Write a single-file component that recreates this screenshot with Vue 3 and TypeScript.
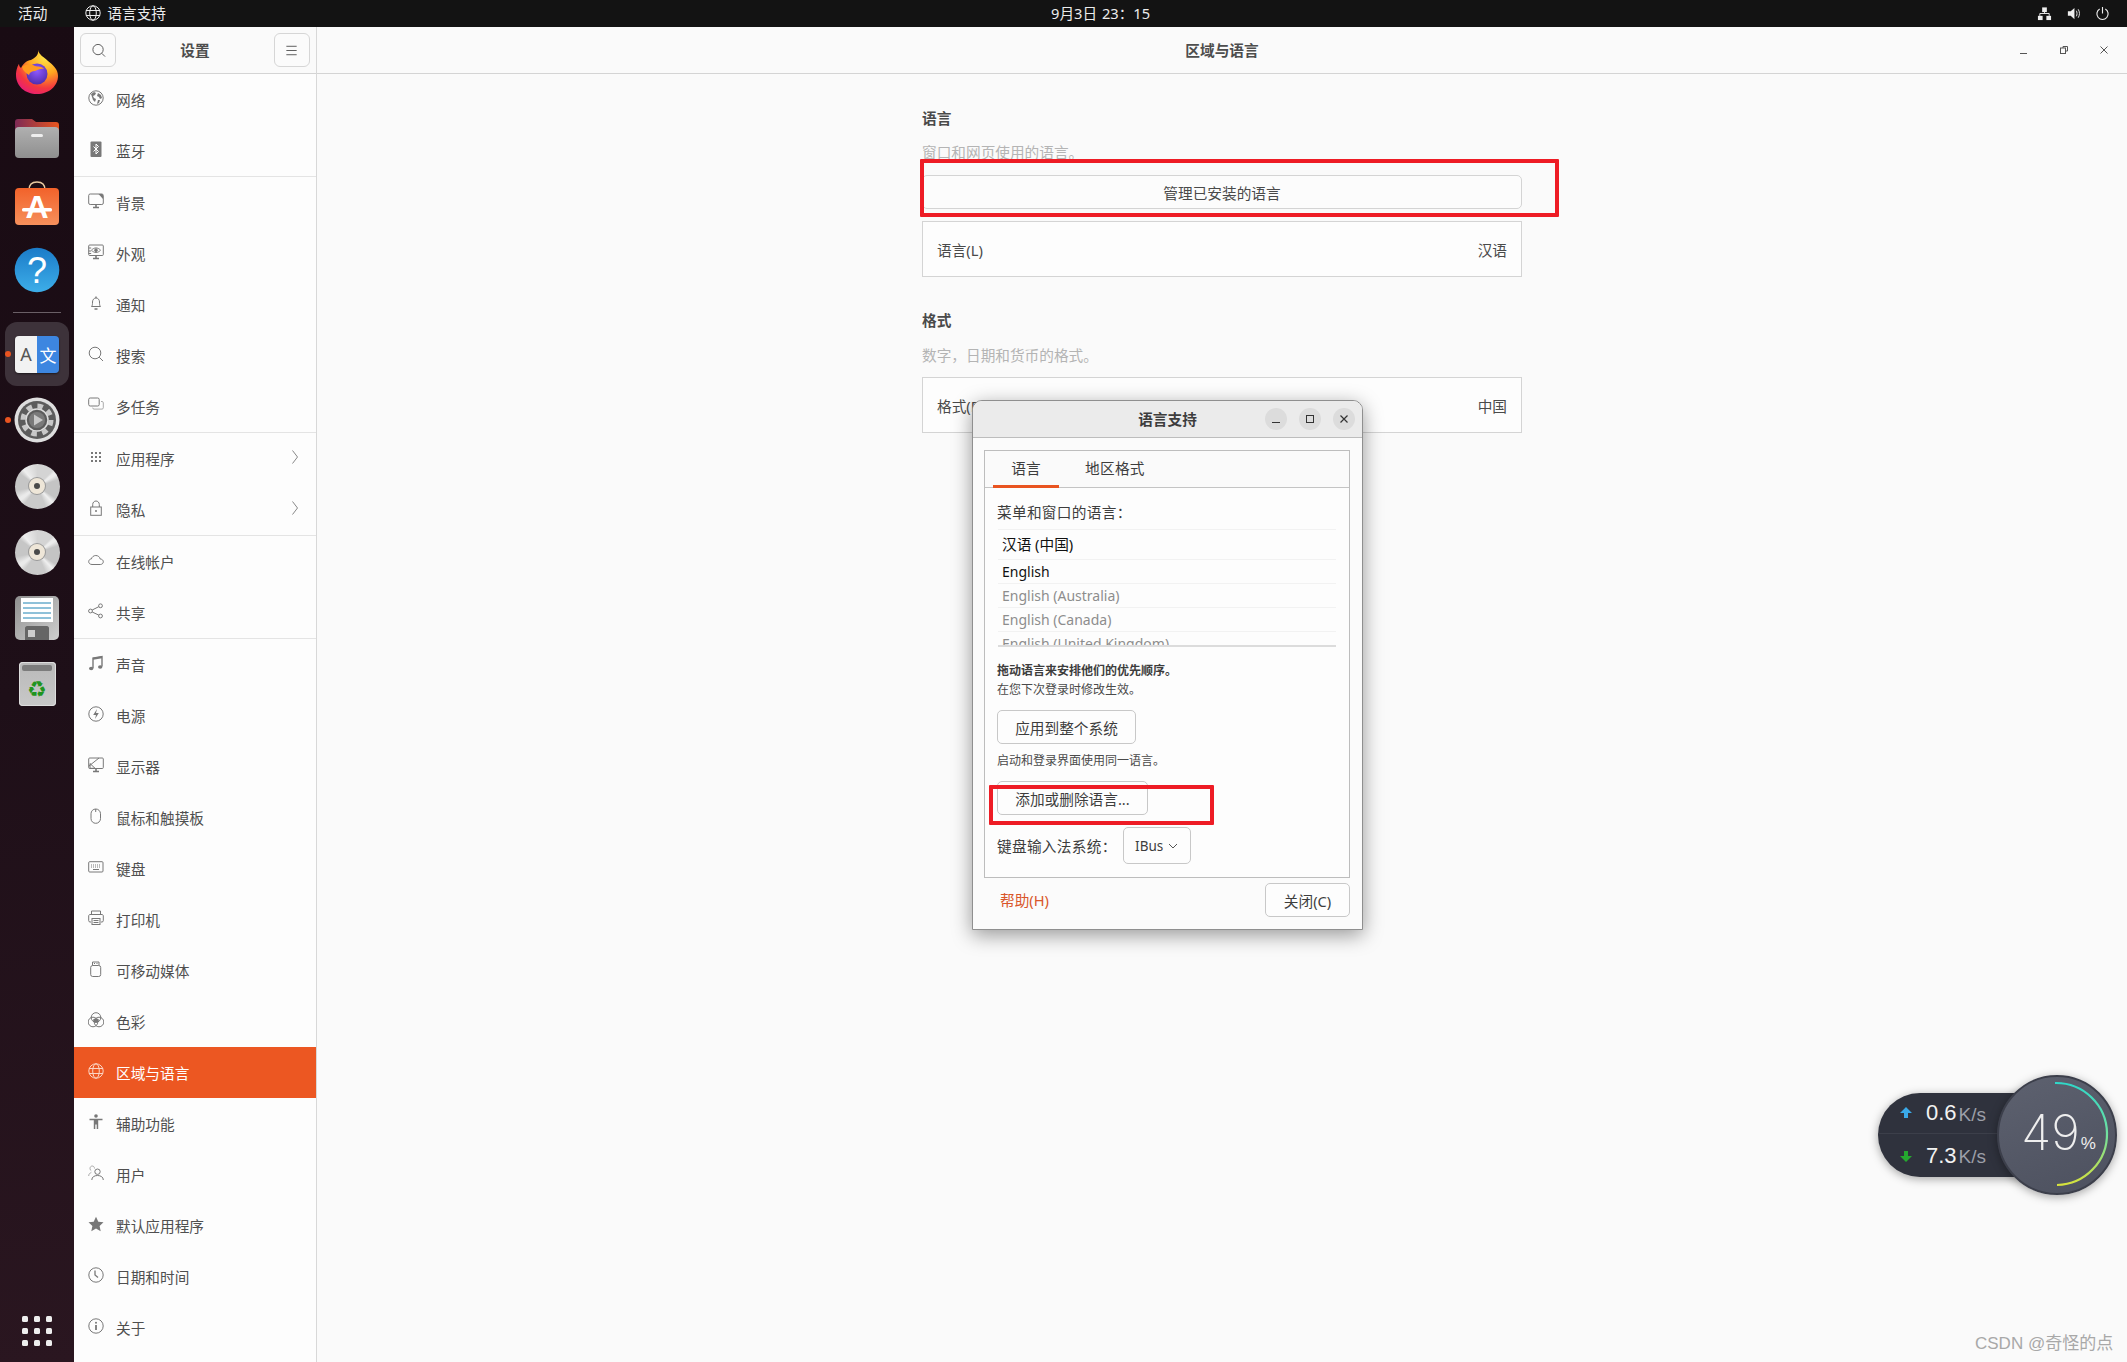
<script setup lang="ts">
interface NavItem { name: string; icon: string; arrow?: boolean; active?: boolean }

const ic: Record<string, string> = {
  network: '<circle cx="8" cy="8" r="7.2"/><path fill="currentColor" stroke="none" d="M3 4l3-2 2 1-1 2-2 1 1 2 2 1-1 3-2-2-1-3zM10 3l3 2 1 3-2 1-1-2-2-1zM10 10l2 0-1 3-2 1z"/>',
  bluetooth: '<rect x="2.5" y="0.5" width="11" height="15.5" rx="1" fill="currentColor" stroke="none"/><path stroke="#fff" d="M5.5 5.5l5 5-2.5 2.5v-10l2.5 2.5-5 5"/>',
  background: '<rect x="0.7" y="1" width="14.6" height="10.5" rx="1.5"/><path d="M5 14.5h6M8 11.5v3" stroke-width="1.6"/><path fill="currentColor" stroke="none" d="M10.5 1h3.5l1 1v4z"/>',
  appearance: '<rect x="0.7" y="1" width="14.6" height="10.5" rx="1"/><path d="M5 14.5h6M8 11.5v3" stroke-width="1.6"/><path d="M3.5 6.2c2.5-3 6.5-3 9 0-2.5 3-6.5 3-9 0z"/><circle cx="8" cy="6.2" r="1.3" fill="currentColor"/><path d="M0.7 4h2.5M0.7 7h2.5M0.7 9.5h2.5"/>',
  bell: '<path d="M3.5 11.5c1-1 1-2.5 1-4.5 0-2.2 1.5-4 3.500-4s3.500 1.800 3.500 4c0 2 0 3.500 1 4.500z"/><path d="M8 1.500v1.500M6.500 14h3" stroke-width="1.300"/>',
  search: '<circle cx="7" cy="7" r="5.800"/><path d="M11.200 11.200l3.800 3.800"/>',
  multi: '<rect x="0.700" y="1" width="10.500" height="8" rx="1.500"/><path d="M13 4.500h1c.8 0 1.300.5 1.300 1.300v5c0 .8-.5 1.300-1.300 1.300H6c-.8 0-1.300-.5-1.300-1.300V11" stroke="#aaa"/>',
  apps: '<g fill="currentColor" stroke="none"><rect x="3" y="3" width="2" height="2"/><rect x="7" y="3" width="2" height="2"/><rect x="11" y="3" width="2" height="2"/><rect x="3" y="7" width="2" height="2"/><rect x="7" y="7" width="2" height="2"/><rect x="11" y="7" width="2" height="2"/><rect x="3" y="11" width="2" height="2"/><rect x="7" y="11" width="2" height="2"/><rect x="11" y="11" width="2" height="2"/></g>',
  lock: '<rect x="2.700" y="7" width="10.600" height="8.300"/><path d="M4.700 7V4.500c0-2 1.500-3.500 3.300-3.500s3.300 1.500 3.300 3.500V7"/><circle cx="8" cy="11" r="1" fill="currentColor" stroke="none"/>',
  cloud: '<path d="M4 12.500c-2 0-3.300-1.300-3.300-2.800 0-1.500 1.100-2.700 2.700-2.800C4 4.800 5.800 3.500 7.800 3.500c2.300 0 4 1.500 4.400 3.500 2 .1 3.100 1.300 3.100 2.800s-1.300 2.700-3 2.700z"/>',
  share: '<circle cx="2.500" cy="8" r="1.900"/><circle cx="12.500" cy="2.800" r="1.900"/><circle cx="12.500" cy="13" r="1.900"/><path d="M4.200 7l6.600-3.300M4.200 9l6.600 3.100"/>',
  music: '<path d="M5 13V3l9-1.500v10" stroke-width="1.400"/><path d="M5 3.800l9-1.500" stroke-width="2"/><ellipse cx="3.200" cy="13.500" rx="2.200" ry="1.700" fill="currentColor" stroke="none"/><ellipse cx="12.200" cy="12" rx="2.200" ry="1.700" fill="currentColor" stroke="none"/>',
  power: '<circle cx="8" cy="8" r="7.200"/><path fill="currentColor" stroke="none" d="M9 3L5.200 9H8l-1 4 3.800-6H8z"/>',
  display: '<rect x="0.700" y="1" width="14.600" height="10.500" rx="1"/><path d="M5 14.500h6M8 11.500v3" stroke-width="1.600"/><path d="M1 9l10-8M2 6.500l5 4.800H2z"/>',
  mouse: '<rect x="3" y="1" width="9.500" height="14.300" rx="4.700"/><path d="M7.700 1v3"/>',
  keyboard: '<rect x="0.700" y="2.700" width="14.300" height="10.300" rx="1"/><path stroke-dasharray="1 1" d="M3 6h10M3 8h10"/><path d="M5 10.500h6"/>',
  printer: '<path d="M3.500 4.500V1h9v3.500"/><path d="M3 12H2c-.8 0-1.300-.5-1.300-1.300V6c0-.8.5-1.500 1.300-1.500h12c.8 0 1.300.7 1.300 1.500v4.700c0 .8-.5 1.300-1.300 1.300h-1"/><rect x="4" y="8.500" width="8" height="6"/><path d="M5.500 10.500h5M5.500 12.500h5"/>',
  usb: '<rect x="2.700" y="4.500" width="10" height="11" rx="2"/><path d="M4.500 4.500V1h6.500v3.500"/><path d="M6 2.500h1M8.500 2.500h1"/>',
  color: '<circle cx="8" cy="5.500" r="4.800"/><circle cx="5" cy="10" r="4.800"/><circle cx="11" cy="10" r="4.800"/><path fill="currentColor" stroke="none" d="M8 6.500c1.300 0 2.300.5 3 1.200-.2 1.500-1.400 2.800-3 3.100-1.600-.3-2.800-1.600-3-3.100.7-.7 1.700-1.200 3-1.200z"/>',
  globe: '<circle cx="8" cy="8" r="7.200"/><ellipse cx="8" cy="8" rx="3.300" ry="7.200"/><path d="M1 5.500h14M1 10.500h14"/>',
  a11y: '<circle cx="8" cy="2" r="1.800" fill="currentColor" stroke="none"/><path fill="currentColor" stroke="none" d="M1.500 4.800h13v1.400H10.200V15H8.700v-4.500H7.300V15H5.800V6.200H1.500z"/>',
  user: '<circle cx="9.500" cy="6.700" r="2.700"/><path d="M3.800 15c0-3 2.500-4.500 5.700-4.500S15.300 12 15.300 15"/><path stroke="#aaa" d="M6.500 3.500C6.500 2 5.500 1 4.200 1S2 2.200 2 3.500c0 1 .5 2 1.300 2.300M.7 11c0-2 1-3 2.600-3.300"/>',
  star: '<path fill="currentColor" stroke="none" d="M8 .8l2.300 4.900 5.200.6-3.900 3.600 1.100 5.300L8 12.500l-4.700 2.700 1.100-5.300L.5 6.300l5.200-.6z"/>',
  clock: '<circle cx="8" cy="8" r="7.200"/><path d="M7 3.500V8l3 2.500" stroke-width="1.300"/>',
  info: '<circle cx="8" cy="8" r="7.200"/><circle cx="8" cy="4.700" r="1" fill="currentColor" stroke="none"/><path d="M8 7v5" stroke-width="1.800"/>',
}

const groups: NavItem[][] = [
  [{ name: '网络', icon: 'network' }, { name: '蓝牙', icon: 'bluetooth' }],
  [
    { name: '背景', icon: 'background' }, { name: '外观', icon: 'appearance' }, { name: '通知', icon: 'bell' },
    { name: '搜索', icon: 'search' }, { name: '多任务', icon: 'multi' },
  ],
  [{ name: '应用程序', icon: 'apps', arrow: true }, { name: '隐私', icon: 'lock', arrow: true }],
  [{ name: '在线帐户', icon: 'cloud' }, { name: '共享', icon: 'share' }],
  [
    { name: '声音', icon: 'music' }, { name: '电源', icon: 'power' }, { name: '显示器', icon: 'display' },
    { name: '鼠标和触摸板', icon: 'mouse' }, { name: '键盘', icon: 'keyboard' }, { name: '打印机', icon: 'printer' },
    { name: '可移动媒体', icon: 'usb' }, { name: '色彩', icon: 'color' }, { name: '区域与语言', icon: 'globe', active: true },
    { name: '辅助功能', icon: 'a11y' }, { name: '用户', icon: 'user' }, { name: '默认应用程序', icon: 'star' },
    { name: '日期和时间', icon: 'clock' }, { name: '关于', icon: 'info' },
  ],
]

const languages = [
  { label: '汉语 (中国)', cls: 'first' },
  { label: 'English', cls: 'on' },
  { label: 'English (Australia)', cls: 'off' },
  { label: 'English (Canada)', cls: 'off' },
  { label: 'English (United Kingdom)', cls: 'off' },
]
</script>

<template>
  <div class="screen">
    <header class="topbar">
      <div class="top-left">
        <span>活动</span>
        <span class="app-name">
          <svg class="top-globe" viewBox="0 0 16 16" fill="none" stroke="currentColor" stroke-width="1" v-html="ic.globe"></svg>
          语言支持
        </span>
      </div>
      <div class="clock">9月3日  23：15</div>
      <div class="tray">
        <svg viewBox="0 0 16 16" fill="#eee"><rect x="5.500" y="1.500" width="5" height="5"/><rect x="1" y="10.500" width="5" height="4.500"/><rect x="10" y="10.500" width="5" height="4.500"/><path d="M3 10.500V8h10v2.500M8 6.500V8" fill="none" stroke="#eee"/></svg>
        <svg viewBox="0 0 16 16" fill="#eee"><path d="M2 5.500h3L9 2v12l-4-3.500H2z"/><path d="M11 5c1 1.500 1 4.500 0 6M13 3.500c1.800 2.500 1.800 6.500 0 9" fill="none" stroke="#eee"/></svg>
        <svg viewBox="0 0 16 16" fill="none" stroke="#eee" stroke-width="1.200"><path d="M5 3.200a6 6 0 1 0 6 0M8 1v7"/></svg>
      </div>
    </header>

    <div class="desktop">
      <aside class="dock">
        <div class="dock-item">
          <svg width="46" height="46" viewBox="0 0 46 46">
            <defs>
              <radialGradient id="ffa" cx="0.7" cy="0.15" r="1"><stop offset="0" stop-color="#ffe94a"/><stop offset="0.4" stop-color="#ffa41f"/><stop offset="0.72" stop-color="#f4373f"/><stop offset="1" stop-color="#e31587"/></radialGradient>
              <radialGradient id="ffb" cx="0.5" cy="0.35" r="0.7"><stop offset="0" stop-color="#9059ff"/><stop offset="1" stop-color="#4b2aa8"/></radialGradient>
            </defs>
            <path fill="url(#ffa)" d="M24 1c1 5 6 7 10 11 5 4 10 8 10 15 0 10-9 18-21 18S2 37 2 26c0-5 2-10 3-11 0 2 1 3 2 4 2-4 6-8 10-8 3-2 8-4 7-10z"/>
            <circle cx="23" cy="25" r="10.500" fill="url(#ffb)"/>
            <path fill="#ff9a1f" d="M8 18c4-3 9-3 13-1 3 1 7 0 9 3-3-1-6 1-9 2-3 0-5 1-6 4-3-2-6-4-7-8z"/>
          </svg>
        </div>
        <div class="dock-item">
          <svg width="46" height="44" viewBox="0 0 46 44">
            <defs>
              <linearGradient id="fo" x1="0" x2="1" y1="0" y2="0"><stop offset="0" stop-color="#7d2a55"/><stop offset="1" stop-color="#e8561f"/></linearGradient>
              <linearGradient id="fg" x1="0" x2="0" y1="0" y2="1"><stop offset="0" stop-color="#b0b0b0"/><stop offset="1" stop-color="#8f8f8f"/></linearGradient>
            </defs>
            <path fill="url(#fo)" d="M1 6c0-2 1-3 3-3h14l4 3h20c2 0 3 1 3 3v12H1z"/>
            <rect x="1" y="11" width="44" height="31" rx="4" fill="url(#fg)"/>
            <rect x="17" y="18" width="12" height="3" rx="1.500" fill="#eee"/>
          </svg>
        </div>
        <div class="dock-item">
          <svg width="46" height="46" viewBox="0 0 46 46">
            <defs><linearGradient id="st" x1="0" x2="0" y1="0" y2="1"><stop offset="0" stop-color="#f2622a"/><stop offset="1" stop-color="#f6905c"/></linearGradient></defs>
            <path d="M15 9c0-5 3-8 8-8s8 3 8 8" fill="none" stroke="#e8c9a0" stroke-width="1.500"/>
            <rect x="1" y="7" width="44" height="37" rx="4" fill="url(#st)"/>
            <text x="23" y="37" text-anchor="middle" fill="#fff" font-size="32" font-weight="700" font-family="Liberation Sans">A</text>
            <rect x="8" y="27" width="30" height="3.500" rx="1.500" fill="#fff"/>
          </svg>
        </div>
        <div class="dock-item">
          <svg width="46" height="46" viewBox="0 0 46 46">
            <defs><linearGradient id="hb" x1="0" x2="0" y1="0" y2="1"><stop offset="0" stop-color="#1b7bc8"/><stop offset="1" stop-color="#3daee9"/></linearGradient></defs>
            <circle cx="23" cy="23" r="22.300" fill="url(#hb)"/>
            <text x="23" y="36" text-anchor="middle" fill="#fff" font-size="36" font-family="Liberation Sans">?</text>
          </svg>
        </div>
        <div class="dock-sep"></div>
        <div class="dock-item dock-active">
          <span class="running"></span>
          <div class="lang-icon"><span class="lang-a">A</span><span class="lang-b">文</span></div>
        </div>
        <div class="dock-item">
          <span class="running"></span>
          <svg width="46" height="46" viewBox="0 0 46 46">
            <circle cx="23" cy="23" r="22.500" fill="#dedede"/>
            <circle cx="23" cy="23" r="19" fill="#5c5c5c"/>
            <circle cx="23" cy="23" r="14" fill="none" stroke="#c8c8c8" stroke-width="5" stroke-dasharray="5.500 5.500"/>
            <circle cx="23" cy="23" r="11" fill="#5c5c5c" stroke="#ddd" stroke-width="1.500"/>
            <circle cx="23" cy="23" r="8" fill="#7a7a7a"/>
            <path d="M20 17.500l9 5.500-9 5.500z" fill="#c8c8c8"/>
          </svg>
        </div>
        <div v-for="n in 2" :key="n" class="dock-item">
          <div class="cd"><span class="cd-hub"></span></div>
        </div>
        <div class="dock-item">
          <svg width="46" height="46" viewBox="0 0 46 46">
            <defs><linearGradient id="fl" x1="0" x2="1" y1="0" y2="1"><stop offset="0" stop-color="#8f8f8f"/><stop offset="1" stop-color="#cfcfcf"/></linearGradient></defs>
            <rect x="1" y="1" width="44" height="44" rx="5" fill="url(#fl)"/>
            <rect x="7" y="3" width="32" height="24" fill="#fff"/>
            <path d="M9 8h28M9 13h28M9 18h28M9 23h28" stroke="#1f83b3" stroke-width="1"/>
            <path d="M11 33c0-1 1-2 2-2h20c1 0 2 1 2 2v12H11z" fill="#666"/>
            <rect x="14" y="35" width="7" height="7" fill="#ccc"/>
          </svg>
        </div>
        <div class="dock-item">
          <div class="bin"><span class="bin-lid"></span><span class="bin-mark">♻</span></div>
        </div>
        <div class="apps-grid"><span v-for="n in 9" :key="n"></span></div>
      </aside>

      <section class="settings">
        <nav class="sidebar">
          <div class="side-head">
            <button class="head-btn">
              <svg viewBox="0 0 16 16" fill="none" stroke="#555" stroke-width="1"><circle cx="7.500" cy="7" r="5.500"/><path d="M11.500 11l3.500 3.500"/></svg>
            </button>
            <span class="head-title">设置</span>
            <button class="head-btn">
              <svg viewBox="0 0 16 16" fill="none" stroke="#555" stroke-width="1"><path d="M2.500 3.500h11M2.500 8h11M2.500 12.500h11"/></svg>
            </button>
          </div>
          <div v-for="(g, i) in groups" :key="i" class="nav-group">
            <div v-for="it in g" :key="it.name" class="nav-row" :class="{ active: it.active }">
              <svg class="nav-icon" viewBox="0 0 16 16" fill="none" stroke="currentColor" stroke-width="1" v-html="ic[it.icon]"></svg>
              <span class="nav-label">{{ it.name }}</span>
              <svg v-if="it.arrow" class="nav-arrow" viewBox="0 0 8 16" fill="none" stroke="#888" stroke-width="1"><path d="M1.500 1.500L6.500 8l-5 6.500"/></svg>
            </div>
          </div>
        </nav>

        <main class="main">
          <div class="main-head">
            <span class="head-title">区域与语言</span>
            <div class="win-btns">
              <svg viewBox="0 0 12 12" fill="none" stroke="#555"><path d="M2 9.500h7"/></svg>
              <svg viewBox="0 0 12 12" fill="none" stroke="#555"><rect x="2.500" y="4" width="5" height="5.500"/><path d="M5 4V2.500h4.500V7H7.500"/></svg>
              <svg viewBox="0 0 12 12" fill="none" stroke="#555"><path d="M2.500 2.500l7 7M9.500 2.500l-7 7"/></svg>
            </div>
          </div>
          <div class="main-body">
            <h2 class="sec-title">语言</h2>
            <p class="sec-sub">窗口和网页使用的语言。</p>
            <div class="wide-btn">管理已安装的语言</div>
            <div class="value-row"><span>语言(L)</span><span>汉语</span></div>
            <h2 class="sec-title second">格式</h2>
            <p class="sec-sub">数字，日期和货币的格式。</p>
            <div class="value-row flush"><span>格式(F)</span><span>中国</span></div>
          </div>
        </main>
      </section>
    </div>

    <div class="mark mark-top"></div>

    <div class="dialog">
      <div class="dlg-head">
        <span class="dlg-title">语言支持</span>
        <div class="dlg-ctrls">
          <span class="dlg-ctrl"><svg viewBox="0 0 12 12" fill="none" stroke="#333" stroke-width="1"><path d="M2 9.500h8"/></svg></span>
          <span class="dlg-ctrl"><svg viewBox="0 0 12 12" fill="none" stroke="#333" stroke-width="1"><rect x="2.500" y="2.500" width="7" height="7"/></svg></span>
          <span class="dlg-ctrl"><svg viewBox="0 0 12 12" fill="none" stroke="#333" stroke-width="1.200"><path d="M2.500 2.500l7 7M9.500 2.500l-7 7"/></svg></span>
        </div>
      </div>
      <div class="dlg-body">
        <div class="frame">
          <div class="tabs">
            <span class="tab current">语言</span>
            <span class="tab">地区格式</span>
          </div>
          <div class="pane">
            <div class="pane-label">菜单和窗口的语言：</div>
            <div class="lang-list">
              <div v-for="l in languages" :key="l.label" class="lang-row" :class="l.cls">{{ l.label }}</div>
            </div>
            <div class="hint-bold">拖动语言来安排他们的优先顺序。</div>
            <div class="hint">在您下次登录时修改生效。</div>
            <div class="dlg-btn apply">应用到整个系统</div>
            <div class="hint after">启动和登录界面使用同一语言。</div>
            <div class="dlg-btn addrm">添加或删除语言...</div>
            <div class="ime">
              <span>键盘输入法系统：</span>
              <span class="ime-select">IBus
                <svg viewBox="0 0 10 10" fill="none" stroke="#555" stroke-width="1"><path d="M1 3l4 4 4-4"/></svg>
              </span>
            </div>
          </div>
        </div>
        <div class="dlg-foot">
          <span class="help">帮助(H)</span>
          <span class="dlg-btn close">关闭(C)</span>
        </div>
      </div>
    </div>

    <div class="mark mark-bottom"></div>

    <div class="speed">
      <div class="pill">
        <div class="pill-row">
          <svg viewBox="0 0 14 14" fill="#3aa9e8"><path d="M7 1l6 6H9v5H5V7H1z"/></svg>
          <b>0.6</b><i>K/s</i>
        </div>
        <div class="pill-row lower">
          <svg viewBox="0 0 14 14" fill="#25a82f"><path d="M7 13L1 7h4V2h4v5h4z"/></svg>
          <b>7.3</b><i>K/s</i>
        </div>
      </div>
      <div class="gauge">
        <svg class="gauge-arc" viewBox="0 0 120 120" fill="none">
          <defs><linearGradient id="arc" x1="0" x2="0" y1="0" y2="1"><stop offset="0" stop-color="#2fd8c8"/><stop offset="0.5" stop-color="#70e0a0"/><stop offset="1" stop-color="#d6e23c"/></linearGradient></defs>
          <path d="M58 8a51 51 0 0 1 2 102" stroke="url(#arc)" stroke-width="2.200"/>
        </svg>
        <span class="gauge-num">49</span><span class="gauge-pct">%</span>
      </div>
    </div>

    <div class="watermark">CSDN @奇怪的点</div>
  </div>
</template>

<style>
html, body { margin: 0; padding: 0; background: #fafafa; }
</style>

<style scoped>
.screen {
  position: relative;
  width: 2127px;
  height: 1362px;
  overflow: hidden;
  display: flex;
  flex-direction: column;
  font-family: "Noto Sans", "Noto Sans CJK SC", sans-serif;
  font-size: 14.67px;
  color: #4a4a4a;
}
.topbar {
  height: 27px;
  flex: none;
  background: #131313;
  color: #ececec;
  position: relative;
  display: flex;
  align-items: center;
  justify-content: space-between;
  padding: 0 17px 0 18px;
  line-height: 27px;
}
.top-left { display: flex; gap: 38px; align-items: center; }
.app-name { display: flex; align-items: center; gap: 6px; }
.top-globe { width: 16px; height: 16px; margin-top: -2px; }
.clock { position: absolute; left: 1051px; white-space: pre; font-size: 14.67px; word-spacing: 1px; }
.tray { display: flex; gap: 14px; align-items: center; }
.tray svg { width: 15px; height: 15px; }

.desktop { flex: 1; display: flex; min-height: 0; }
.dock {
  width: 74px;
  flex: none;
  background: linear-gradient(175deg, #190b13 0%, #1e0f18 50%, #2a1620 100%);
  padding-top: 12px;
  display: flex;
  flex-direction: column;
  align-items: center;
  box-sizing: border-box;
}
.dock-item {
  width: 64px;
  height: 66px;
  flex: none;
  display: flex;
  align-items: center;
  justify-content: center;
  position: relative;
  border-radius: 12px;
}
.dock-active { background: #3d323a; height: 64px; margin: 1px 0; }
.running {
  position: absolute;
  left: 0;
  top: 50%;
  width: 6px;
  height: 6px;
  margin-top: -3px;
  border-radius: 50%;
  background: #e95420;
}
.dock-sep { width: 48px; height: 1px; background: #6a5f66; margin: 9px 0 8px; }
.lang-icon {
  width: 44px;
  height: 37px;
  border-radius: 4px;
  overflow: hidden;
  display: flex;
  box-shadow: 0 1px 2px rgba(0, 0, 0, .5);
}
.lang-a, .lang-b {
  flex: 1;
  display: flex;
  align-items: center;
  justify-content: center;
  font-size: 17px;
}
.lang-a { background: #f2f2f2; color: #555; font-size: 18px; }
.lang-b { background: #3d86e0; color: #fff; }
.cd {
  width: 45px;
  height: 45px;
  border-radius: 50%;
  background: conic-gradient(#d4d4d4 0 12%, #ececec 14% 16%, #c4c4c4 20% 34%, #f0f0f0 38%, #cacaca 44% 60%, #eaeaea 64% 66%, #c6c6c6 72% 85%, #eeeeee 89%, #d4d4d4);
  display: flex;
  align-items: center;
  justify-content: center;
}
.cd-hub {
  width: 6px;
  height: 6px;
  border-radius: 50%;
  background: #4a4a4a;
  border: 5px solid #eee6d8;
  box-shadow: 0 0 0 1px #999;
}
.bin {
  width: 37px;
  height: 44px;
  border-radius: 4px;
  background: linear-gradient(#b9b9b9, #c8c8c8);
  display: flex;
  flex-direction: column;
  align-items: center;
  box-shadow: inset 0 0 0 1px #ddd;
}
.bin-lid { width: 30px; height: 6px; margin-top: 3px; border-radius: 2px; background: #7c7c7c; }
.bin-mark { color: #1f9420; font-size: 22px; line-height: 28px; margin-top: 5px; font-family: "DejaVu Sans", sans-serif; }
.apps-grid {
  margin-top: auto;
  margin-bottom: 16px;
  display: grid;
  grid-template-columns: repeat(3, 6px);
  grid-auto-rows: 6px;
  gap: 6px;
}
.apps-grid span { background: #eee; border-radius: 1.500px; }

.settings { flex: 1; display: flex; min-width: 0; background: #fafafa; }
.sidebar {
  width: 243px;
  flex: none;
  background: #fdfdfd;
  border-right: 1px solid #d8d8d8;
  box-sizing: border-box;
}
.side-head {
  height: 47px;
  box-sizing: border-box;
  padding: 6px;
  display: flex;
  align-items: center;
  justify-content: space-between;
  background: #fafafa;
  border-bottom: 1px solid #d4d4d4;
}
.head-btn {
  width: 36px;
  height: 34px;
  padding: 0;
  border: 1px solid #d6d6d6;
  border-radius: 6px;
  background: #fbfbfb;
  display: flex;
  align-items: center;
  justify-content: center;
}
.head-btn svg { width: 15px; height: 15px; }
.head-title { font-weight: 700; color: #4d4d4d; font-size: 14.67px; margin-top: -2px; }
.nav-group { border-bottom: 1px solid #e4e4e4; }
.nav-group:last-child { border-bottom: 0; }
.nav-row {
  height: 51px;
  display: flex;
  align-items: center;
  padding: 0 14px;
  color: #787878;
}
.nav-label { margin-left: 12px; color: #4f4f4f; flex: 1; }
.nav-icon { width: 16px; height: 16px; margin-top: -4px; flex: none; }
.nav-arrow { width: 8px; height: 16px; margin-top: -4px; margin-right: 3px; }
.nav-row.active { background: #ec5722; color: #fbd3c2; }
.nav-row.active .nav-label { color: #fff; }

.main { flex: 1; min-width: 0; display: flex; flex-direction: column; }
.main-head {
  height: 47px;
  box-sizing: border-box;
  flex: none;
  border-bottom: 1px solid #d4d4d4;
  display: flex;
  align-items: center;
  justify-content: center;
  position: relative;
}
.win-btns { position: absolute; right: 17px; top: 17px; display: flex; gap: 28px; }
.win-btns svg { width: 12px; height: 12px; }
.main-body { width: 600px; margin-left: 605px; padding-top: 34px; }
.sec-title { margin: 0; font-size: 14.67px; line-height: 20px; font-weight: 700; color: #4a4a4a; }
.sec-title.second { margin-top: 33px; }
.sec-sub { margin: 14px 0 0; line-height: 20px; color: #b4b4b4; }
.sec-title.second + .sec-sub { margin-top: 15px; }
.wide-btn {
  margin-top: 13px;
  height: 34px;
  box-sizing: border-box;
  border: 1px solid #d4d4d4;
  border-radius: 5px;
  background: #fcfcfc;
  display: flex;
  align-items: center;
  justify-content: center;
}
.value-row {
  margin-top: 12px;
  height: 56px;
  box-sizing: border-box;
  border: 1px solid #d4d4d4;
  background: #fdfdfd;
  padding: 0 14px;
  display: flex;
  align-items: center;
  justify-content: space-between;
}
.value-row.flush { margin-top: 12px; }

.mark { position: absolute; border: 4px solid #ee1c25; box-sizing: border-box; border-radius: 1px; pointer-events: none; z-index: 4; }
.mark-top { left: 920px; top: 159px; width: 639px; height: 58px; }
.mark-bottom { left: 989px; top: 785px; width: 225px; height: 40px; }

.dialog {
  position: absolute;
  left: 972px;
  top: 400px;
  width: 391px;
  height: 530px;
  box-sizing: border-box;
  border: 1px solid #8f8f8f;
  border-radius: 10px 10px 0 0;
  background: #fbfbfb;
  box-shadow: 0 5px 20px rgba(0, 0, 0, .4);
  z-index: 3;
  color: #3d3d3d;
}
.dlg-head {
  height: 36px;
  background: #ebebeb;
  border-bottom: 1px solid #bdbdbd;
  border-radius: 9px 9px 0 0;
  display: flex;
  align-items: center;
  justify-content: center;
  position: relative;
}
.dlg-title { font-weight: 700; color: #3d3d3d; margin-top: -1px; }
.dlg-ctrls { position: absolute; right: 7px; top: 7px; display: flex; gap: 12px; }
.dlg-ctrl {
  width: 22px;
  height: 22px;
  border-radius: 50%;
  background: #dcdcdc;
  display: flex;
  align-items: center;
  justify-content: center;
}
.dlg-ctrl svg { width: 12px; height: 12px; }
.dlg-body { padding: 12px 12px 0 11px; }
.frame { height: 428px; box-sizing: border-box; border: 1px solid #bdbdbd; background: #fdfdfd; }
.tabs {
  height: 37px;
  box-sizing: border-box;
  border-bottom: 1px solid #c4c4c4;
  background: #fafafa;
  display: flex;
  padding-left: 8px;
}
.tab { width: 66px; text-align: center; line-height: 34px; box-sizing: border-box; height: 37px; }
.tab + .tab { width: auto; margin-left: 26px; letter-spacing: .3px; }
.tab.current { border-bottom: 3px solid #e95420; }
.pane { padding: 14px 12px 0; }
.pane-label { line-height: 20px; letter-spacing: .3px; }
.lang-list {
  margin: 7px 0 0 1px;
  width: 338px;
  height: 118px;
  box-sizing: border-box;
  overflow: hidden;
  border-top: 1px solid #f2f2f2;
  border-bottom: 2px solid #dcdcdc;
}
.lang-row {
  height: 24px;
  box-sizing: border-box;
  border-bottom: 1px solid #f2f2f2;
  padding-left: 4px;
  line-height: 23px;
  font-size: 14px;
}
.lang-row.first { height: 30px; line-height: 29px; color: #111; font-size: 14.67px; }
.lang-row.on { color: #111; }
.lang-row.off { color: #8d8d8d; }
.hint-bold { margin-top: 15px; font-size: 12px; line-height: 18px; font-weight: 700; color: #3d3d3d; }
.hint { font-size: 12px; line-height: 18px; margin-top: 1px; color: #4a4a4a; }
.dlg-btn {
  box-sizing: border-box;
  height: 34px;
  border: 1px solid #c8c8c8;
  border-radius: 5px;
  display: flex;
  align-items: center;
  justify-content: center;
  background: #fdfdfd;
}
.apply { width: 139px; margin-top: 11px; }
.hint.after { margin-top: 8px; }
.addrm { width: 151px; margin-top: 11px; }
.ime { display: flex; align-items: center; gap: 6px; margin-top: 12px; letter-spacing: .3px; }
.ime-select {
  box-sizing: border-box;
  width: 68px;
  height: 37px;
  border: 1px solid #c8c8c8;
  border-radius: 5px;
  display: flex;
  align-items: center;
  justify-content: center;
  gap: 5px;
  font-size: 13.500px;
  letter-spacing: 0;
}
.ime-select svg { width: 10px; height: 10px; }
.dlg-foot {
  display: flex;
  align-items: center;
  justify-content: space-between;
  margin-top: 5px;
  padding-left: 16px;
}
.help { color: #d9562a; margin-top: -1px; }
.close { width: 85px; }

.speed { position: absolute; left: 1878px; top: 1075px; width: 238px; height: 118px; z-index: 2; }
.pill {
  position: absolute;
  left: 0;
  top: 18px;
  width: 190px;
  height: 84px;
  border-radius: 42px;
  background: #2f323d;
  box-shadow: 0 2px 10px rgba(0, 0, 0, .35);
}
.pill-row {
  height: 41px;
  box-sizing: border-box;
  border-bottom: 1px solid #3c3f4a;
  display: flex;
  align-items: center;
  padding-left: 21px;
  color: #f2f2f2;
}
.pill-row.lower { border-bottom: 0; height: 43px; }
.pill-row svg { width: 14px; height: 14px; margin-right: 13px; }
.pill-row b { font-family: "Liberation Sans", sans-serif; font-weight: 400; font-size: 22px; }
.pill-row i { font-family: "Liberation Sans", sans-serif; font-style: normal; font-size: 19px; color: #9c9fa8; margin-left: 2px; margin-top: 3px; }
.gauge {
  position: absolute;
  left: 119px;
  top: 0;
  width: 120px;
  height: 120px;
  box-sizing: border-box;
  border-radius: 50%;
  background: linear-gradient(160deg, #5d616f, #4d515f);
  border: 2px solid #3c3f4b;
  box-shadow: 0 2px 10px rgba(0, 0, 0, .35);
  display: flex;
  align-items: center;
  justify-content: center;
  color: #eee;
}
.gauge-arc { position: absolute; left: -2px; top: -2px; width: 120px; height: 120px; }
.gauge-num { font-family: "Inter", sans-serif; font-weight: 200; font-size: 49px; line-height: 1; margin-left: 3px; margin-top: -5px; }
.gauge-pct { font-family: "Liberation Sans", sans-serif; font-size: 17px; margin-top: 17px; margin-left: 1px; }
.watermark {
  position: absolute;
  left: 1975px;
  top: 1333px;
  color: #a8a8a8;
  font-family: "Liberation Sans", "Noto Sans CJK SC", sans-serif;
  font-size: 17px;
  line-height: 22px;
  white-space: nowrap;
}
</style>
